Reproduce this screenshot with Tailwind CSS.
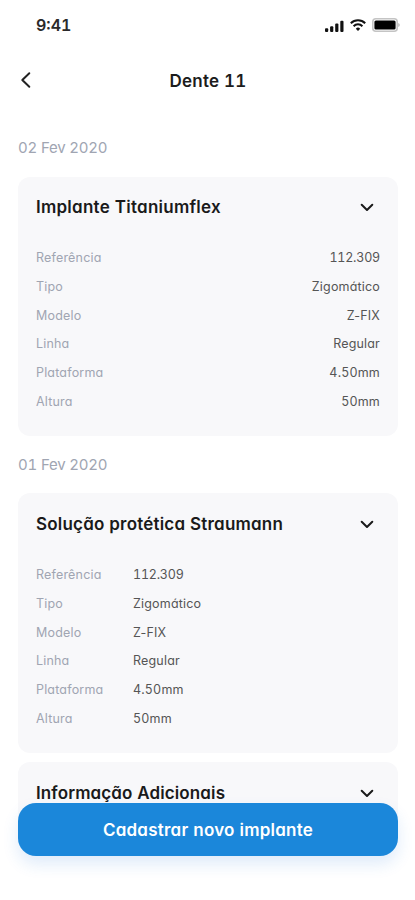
<!DOCTYPE html>
<html lang="pt-BR">
<head>
  <meta charset="UTF-8">
  <meta name="viewport" content="width=device-width, initial-scale=1">
  <title>Dente 11</title>
  <script src="https://cdn.jsdelivr.net/npm/@tailwindcss/browser@4"></script>
</head>
<body class="bg-white font-['Inter',sans-serif] [font-feature-settings:'cv11','tnum']">
  <div class="relative w-[415px] h-[900px] overflow-hidden">

    <!-- Status bar -->
    <div class="flex items-center justify-between h-[50px] pl-9 pr-[15px]">
      <span class="text-[16px] font-semibold text-[#2a2a2a]">9:41</span>
      <div class="flex items-center gap-[6px]">
        <svg class="w-[20px] h-[12px] mt-px" viewBox="0 0 20 12" fill="#111">
          <rect x="1" y="8.3" width="3.2" height="3.7" rx="1"/>
          <rect x="6.1" y="6.3" width="3.2" height="5.7" rx="1"/>
          <rect x="11.2" y="3.6" width="3.2" height="8.4" rx="1"/>
          <rect x="16.3" y="0.8" width="3.2" height="11.2" rx="1"/>
        </svg>
        <svg class="w-[16px] h-[12px]" viewBox="0 0 16 12" fill="none" stroke="#111" stroke-width="2">
          <path d="M0.8 4.2a10.2 10.2 0 0 1 14.4 0"/>
          <path d="M3.6 7.2a6.2 6.2 0 0 1 8.8 0"/>
          <path d="M8 12L5.8 9.7a3.1 3.1 0 0 1 4.4 0z" fill="#111" stroke="none"/>
        </svg>
        <svg class="w-[28px] h-[14px]" viewBox="0 0 28 14">
          <rect x="0.8" y="0.8" width="24.4" height="12.4" rx="3" fill="none" stroke="#c4c4c4" stroke-width="1.6"/>
          <rect x="2.4" y="2.4" width="21.2" height="9.2" rx="1.5" fill="#000"/>
          <path d="M26.4 5v4c1.6-.7 1.6-3.3 0-4z" fill="#aaa"/>
        </svg>
      </div>
    </div>

    <!-- Header -->
    <header class="grid grid-cols-[1fr_auto_1fr] items-center h-[60px] px-[18px]">
      <svg class="w-[16px] h-[18px]" viewBox="0 0 16 18" fill="none" stroke="#222" stroke-width="2" stroke-linecap="round" stroke-linejoin="round">
        <path d="M11.3 2.2L4.3 9l7 6.8"/>
      </svg>
      <h1 class="pt-[3px] pl-px text-[17px] font-semibold text-[#1c1c1c] tracking-[0.2px]">Dente 11</h1>
    </header>

    <main class="px-[18px] pr-[17px]">
      <p class="h-[67px] pt-[27px] text-[15px] leading-[22px] tracking-[-0.2px] text-[#a0a5b2]">02 Fev 2020</p>

      <section class="h-[259px] rounded-[12px] bg-[#f8f8fa] px-[18px] pt-[19px]">
        <div class="flex items-center justify-between h-6 pr-[6px]">
          <h2 class="text-[17px] font-semibold text-[#1a1a1a] tracking-[0.25px]">Implante Titaniumflex</h2>
          <svg class="w-[14px] h-[9px] -mt-px" viewBox="0 0 14 9" fill="none" stroke="#1a1a1a" stroke-width="2" stroke-linecap="round" stroke-linejoin="round"><path d="M1.7 1.8L7 7l5.3-5.2"/></svg>
        </div>
        <dl class="mt-6 text-[12.5px] leading-[28.8px] tracking-[0.18px] text-[#555]">
          <div class="flex justify-between"><dt class="text-[#a0a5b2]">Referência</dt><dd class="tracking-[-0.2px]">112.309</dd></div>
          <div class="flex justify-between"><dt class="text-[#a0a5b2]">Tipo</dt><dd>Zigomático</dd></div>
          <div class="flex justify-between"><dt class="text-[#a0a5b2]">Modelo</dt><dd class="[font-feature-settings:'cv11']">Z-FIX</dd></div>
          <div class="flex justify-between"><dt class="text-[#a0a5b2]">Linha</dt><dd>Regular</dd></div>
          <div class="flex justify-between"><dt class="text-[#a0a5b2]">Plataforma</dt><dd>4.50mm</dd></div>
          <div class="flex justify-between"><dt class="text-[#a0a5b2]">Altura</dt><dd>50mm</dd></div>
        </dl>
      </section>

      <p class="h-[57px] pt-[18px] text-[15px] leading-[22px] tracking-[-0.2px] text-[#a0a5b2]">01 Fev 2020</p>

      <section class="h-[260px] rounded-[12px] bg-[#f8f8fa] px-[18px] pt-[20px]">
        <div class="flex items-center justify-between h-6 pr-[6px]">
          <h2 class="text-[17px] font-semibold text-[#1a1a1a] tracking-[0.2px]">Solução protética Straumann</h2>
          <svg class="w-[14px] h-[9px] -mt-px" viewBox="0 0 14 9" fill="none" stroke="#1a1a1a" stroke-width="2" stroke-linecap="round" stroke-linejoin="round"><path d="M1.7 1.8L7 7l5.3-5.2"/></svg>
        </div>
        <dl class="mt-6 grid grid-cols-[97px_1fr] text-[12.5px] leading-[28.8px] tracking-[0.18px] text-[#555]">
          <dt class="text-[#a0a5b2]">Referência</dt><dd class="tracking-[-0.2px]">112.309</dd>
          <dt class="text-[#a0a5b2]">Tipo</dt><dd>Zigomático</dd>
          <dt class="text-[#a0a5b2]">Modelo</dt><dd class="[font-feature-settings:'cv11']">Z-FIX</dd>
          <dt class="text-[#a0a5b2]">Linha</dt><dd>Regular</dd>
          <dt class="text-[#a0a5b2]">Plataforma</dt><dd>4.50mm</dd>
          <dt class="text-[#a0a5b2]">Altura</dt><dd>50mm</dd>
        </dl>
      </section>

      <section class="mt-[9px] h-[70px] rounded-[12px] bg-[#f8f8fa] px-[18px] pt-[20px]">
        <div class="flex items-center justify-between h-6 pr-[6px]">
          <h2 class="text-[17px] font-semibold text-[#1a1a1a] tracking-[0.12px]">Informação Adicionais</h2>
          <svg class="w-[14px] h-[9px] -mt-px" viewBox="0 0 14 9" fill="none" stroke="#1a1a1a" stroke-width="2" stroke-linecap="round" stroke-linejoin="round"><path d="M1.7 1.8L7 7l5.3-5.2"/></svg>
        </div>
      </section>
    </main>

    <!-- Floating action -->
    <button class="absolute left-[18px] top-[803px] w-[380px] h-[53px] rounded-[18px] bg-[#1b87da] pt-[2px] text-[17px] font-semibold text-white tracking-[0.24px] shadow-[0_8px_16px_rgba(27,110,218,0.14)]">Cadastrar novo implante</button>
  </div>
</body>
</html>
